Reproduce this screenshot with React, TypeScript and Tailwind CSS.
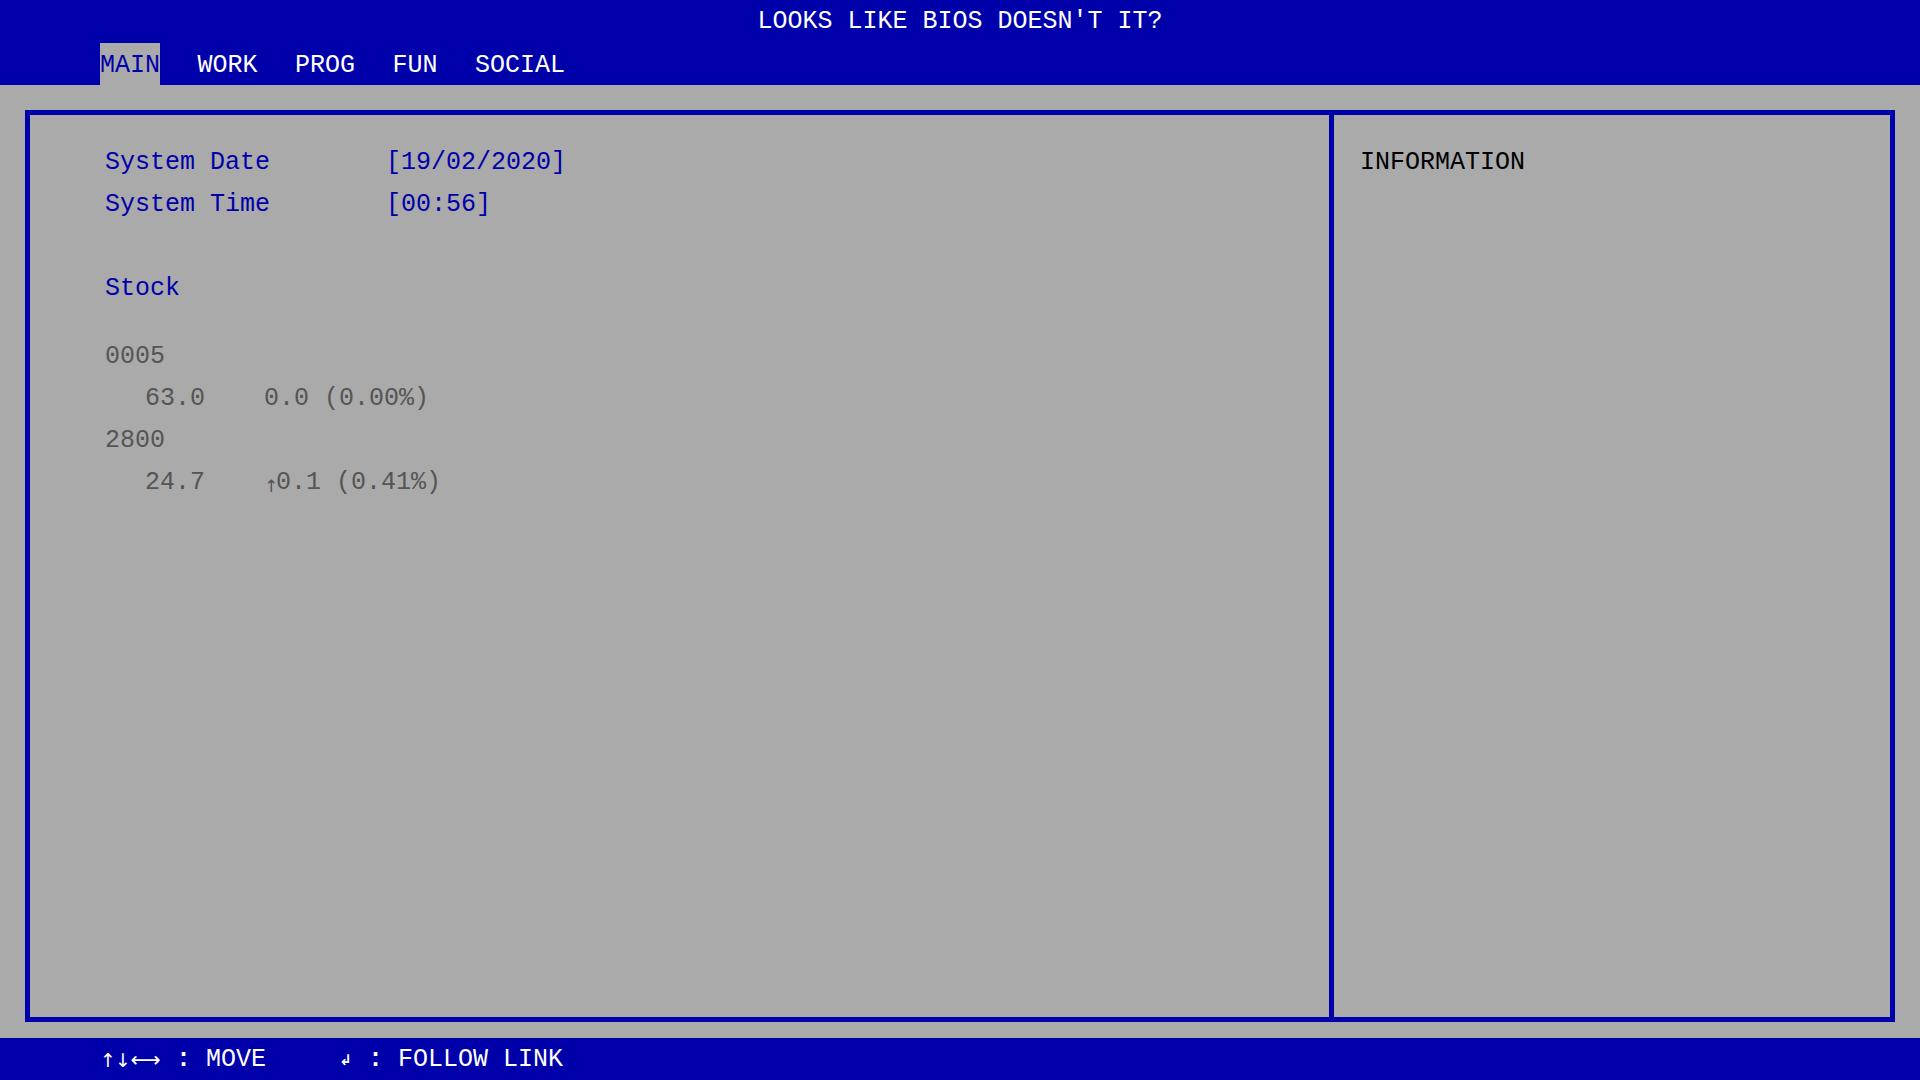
const tabs = ['MAIN', 'WORK', 'PROG', 'FUN', 'SOCIAL']

const stocks = [
  { code: '0005', price: '63.0', up: false, change: '0.0 (0.00%)' },
  { code: '2800', price: '24.7', up: true, change: '0.1 (0.41%)' },
]

export default function App() {
  return (
    <div className="h-screen flex flex-col bg-[#aaaaaa] font-['Liberation_Mono','Courier_New',monospace] text-[25px] overflow-hidden">
      <header className="bg-[#0000aa] text-white">
        <div className="h-[43px] flex items-center justify-center">LOOKS LIKE BIOS DOESN'T IT?</div>
        <nav className="h-[42px] flex pl-[100px] gap-[37.5px]">
          {tabs.map((t, i) => (
            <span
              key={t}
              className={
                i === 0
                  ? 'h-[42px] pt-[2px] leading-[42px] bg-[#aaaaaa] text-[#0000aa]'
                  : 'h-[42px] pt-[2px] leading-[42px] text-white'
              }
            >
              {t}
            </span>
          ))}
        </nav>
      </header>

      <main className="flex-1 min-h-0 px-[25px] pt-[25px] pb-[16px]">
        <div className="h-full border-[5px] border-[#0000aa] grid grid-cols-[1304px_1fr]">
          <section className="border-r-[5px] border-[#0000aa] pl-[75px] pt-[27px] leading-[42px]">
            <div className="flex text-[#0000aa]">
              <span className="w-[281px]">System Date</span>
              <span>[19/02/2020]</span>
            </div>
            <div className="flex text-[#0000aa]">
              <span className="w-[281px]">System Time</span>
              <span>[00:56]</span>
            </div>
            <div className="mt-[42px] text-[#0000aa]">Stock</div>
            <div className="mt-[26px] text-[#555555]">
              {stocks.map((s) => (
                <div key={s.code}>
                  <div>{s.code}</div>
                  <div className="flex pl-[40px]">
                    <span className="w-[119px]">{s.price}</span>
                    {s.up && (
                      <span className="w-[12px] text-[17px] font-['DejaVu_Sans',sans-serif] leading-[42px] translate-y-[3px]">↑</span>
                    )}
                    <span>{s.change}</span>
                  </div>
                </div>
              ))}
            </div>
          </section>
          <section className="pl-[26px] pt-[27px] leading-[42px] text-black">INFORMATION</section>
        </div>
      </main>

      <footer className="h-[42px] bg-[#0000aa] text-white flex items-center pl-[100px] pt-[2px] leading-[40px]">
        <span className="flex items-center font-['DejaVu_Sans',sans-serif]">
          <span className="w-[15px] text-center text-[19px]">↑</span>
          <span className="w-[15px] text-center text-[19px]">↓</span>
          <span className="w-[31px] text-center text-[21px]">⟷</span>
        </span>
        <span className="whitespace-pre"> <b>:</b> MOVE</span>
        <span className="ml-[72px] w-[15px] text-center font-['DejaVu_Sans',sans-serif] text-[15px] font-bold">↲</span>
        <span className="whitespace-pre"> <b>:</b> FOLLOW LINK</span>
      </footer>
    </div>
  )
}
